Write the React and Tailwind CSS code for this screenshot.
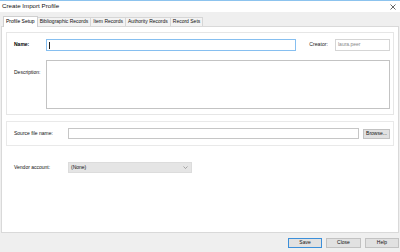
import React from 'react'

const tabs = ['Profile Setup', 'Bibliographic Records', 'Item Records', 'Authority Records', 'Record Sets']

const App = () => {
    return (
        <div className="w-[400px] h-[252px] bg-[#efefef] flex flex-col border-t border-[#8cc3ee] text-[#111] font-['Liberation_Sans',Arial,sans-serif]">
            {/* title bar */}
            <div className="h-[11px] bg-white flex items-center justify-between pl-[2px] pr-[4px]">
                <span className="text-[6.2px] leading-none text-[#111]">Create Import Profile</span>
                <svg width="6" height="6" viewBox="0 0 6 6" className="text-[#555]">
                    <path d="M0.5 0.5 L5.5 5.5 M5.5 0.5 L0.5 5.5" stroke="currentColor" strokeWidth="0.9" />
                </svg>
            </div>

            {/* tab strip */}
            <div className="h-[14px] flex items-end pl-[3px] pt-[3px]">
                {tabs.map((t, i) => (
                    <div
                        key={t}
                        className={
                            i === 0
                                ? 'h-[11px] px-[2px] flex items-center bg-white border border-b-0 border-[#cfcfcf] text-[5px] text-black relative top-[1px]'
                                : 'h-[9px] px-[2px] flex items-center bg-[#f3f3f3] border border-l-0 border-b-0 border-[#d6d6d6] text-[5px] text-[#111]'
                        }
                    >
                        {t}
                    </div>
                ))}
            </div>

            {/* content */}
            <div className="flex-1 bg-white border border-[#d9d9d9] mx-[1px] pl-[4px] pr-[4px] pt-[5px] flex flex-col">
                <div className="border border-[#e6e6e6] h-[83px] pl-[7px] pr-[3px] pt-[6px] flex flex-col gap-[9px]">
                    <div className="flex items-center h-[12px]">
                        <span className="w-[32px] text-[5px] font-bold text-black">Name:</span>
                        <div className="w-[250px] h-[12px] border border-[#86bff0] flex items-center pl-[2px]">
                            <div className="w-px h-[7px] bg-[#222]" />
                        </div>
                        <span className="ml-auto mr-[7px] text-[5.2px] text-[#222]">Creator:</span>
                        <div className="w-[55px] h-[12px] border border-[#d5d5d5] flex items-center pl-[2px] text-[5px] text-[#888]">laura.peer</div>
                    </div>
                    <div className="flex">
                        <span className="w-[32px] text-[5px] text-[#111] pt-[9px]">Description:</span>
                        <div className="flex-1 h-[49px] border border-[#c3c3c3]" />
                    </div>
                </div>

                <div className="mt-[6px] border border-[#e9e9e9] h-[25px] pl-[7px] pr-[3px] flex items-center">
                    <span className="w-[54px] text-[5px] text-[#111]">Source file name:</span>
                    <div className="w-[291px] h-[11px] border border-[#c6c6c6]" />
                    <div className="ml-auto w-[27px] h-[10px] bg-[#e1e1e1] border border-[#c2c2c2] flex items-center justify-center text-[5px] text-[#111]">Browse...</div>
                </div>

                <div className="mt-[16px] pl-[8px] flex items-center">
                    <span className="w-[54px] text-[5px] text-[#111]">Vendor account:</span>
                    <div className="w-[124px] h-[11px] bg-[#e5e5e5] border border-[#dcdcdc] flex items-center justify-between pl-[2px] pr-[3px] text-[5px] text-[#111]">
                        <span>(None)</span>
                        <svg width="5" height="3" viewBox="0 0 5 3">
                            <path d="M0.5 0.5 L2.5 2.5 L4.5 0.5" fill="none" stroke="#888" strokeWidth="0.7" />
                        </svg>
                    </div>
                </div>
            </div>

            {/* footer */}
            <div className="h-[19px] flex items-center justify-end gap-[4px] pr-[1px]">
                <div className="w-[34px] h-[10px] bg-[#e1e1e1] border border-[#3c8fd9] flex items-center justify-center text-[5px] text-[#111]">Save</div>
                <div className="w-[35px] h-[10px] bg-[#e1e1e1] border border-[#c2c2c2] flex items-center justify-center text-[5px] text-[#111]">Close</div>
                <div className="w-[34px] h-[10px] bg-[#e1e1e1] border border-[#c2c2c2] flex items-center justify-center text-[5px] text-[#111]">Help</div>
            </div>
        </div>
    )
}

export default App
